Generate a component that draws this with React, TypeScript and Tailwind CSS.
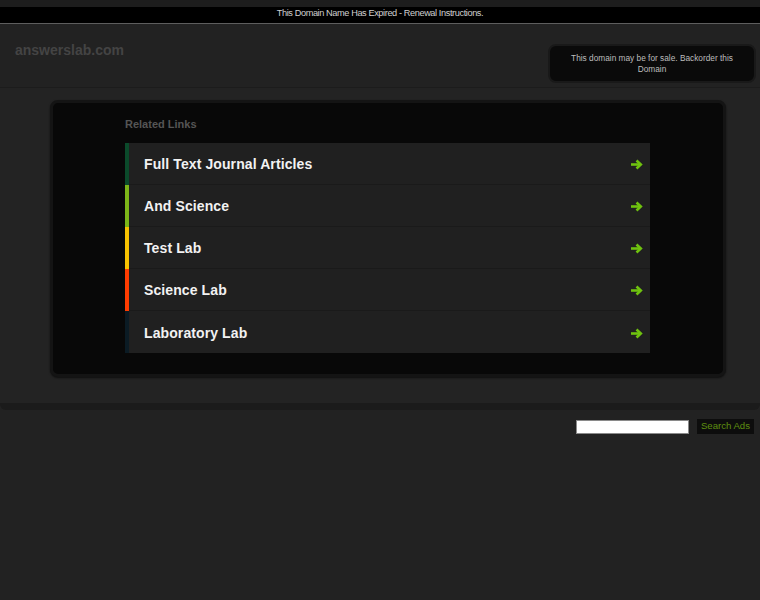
import React from "react";

const links = [
  { label: "Full Text Journal Articles", color: "bg-[#0b4a2b]" },
  { label: "And Science", color: "bg-[#7cb518]" },
  { label: "Test Lab", color: "bg-[#f7c200]" },
  { label: "Science Lab", color: "bg-[#ff3c00]" },
  { label: "Laboratory Lab", color: "bg-[#0b1b24]" },
];

function Arrow() {
  return (
    <svg width="13" height="11" viewBox="0 0 13 11" fill="none">
      <path d="M1 5.5H10.5" stroke="#6fc20f" strokeWidth="2.6" />
      <path d="M6.5 1.5L10.8 5.5L6.5 9.5" stroke="#6fc20f" strokeWidth="2.6" strokeLinejoin="miter" />
    </svg>
  );
}

export default function App() {
  return (
    <div className="min-h-[600px] bg-[#222222] font-['Liberation_Sans',Arial,sans-serif]">
      <div className="h-[7px] bg-[#1d1d1d]" />
      <div className="h-[17px] bg-black border-b border-[#5e5e5e] flex items-start justify-center pt-[1px] text-[9.2px] leading-[10px] tracking-[-0.4px] text-[#d0d0d0]">
        This Domain Name Has Expired - Renewal Instructions.
      </div>
      <div className="h-[64px] flex justify-between border-b border-[#1c1c1c]">
        <div className="pl-[15px] pt-[18px] text-[14px] leading-[17px] font-bold text-[#444444]">
          answerslab.com
        </div>
        <div className="mt-[20px] mr-[4px] w-[208px] h-[39px] rounded-lg bg-[#0a0a0a] border-2 border-[#191919] flex items-center justify-center text-center px-3 text-[8.3px] leading-[11px] text-[#bdbdbd]">
          This domain may be for sale. Backorder this Domain
        </div>
      </div>
      <div className="bg-[#232323] pt-[12px] pb-[26px] border-b-[7px] border-[#1b1b1b] rounded-b-md">
        <div className="ml-[50px] w-[676px] rounded-lg border-[3px] border-[#141414] bg-[#080808] pl-[72px] pr-[73px] pt-[15px] pb-[21px] shadow-[0_1px_2px_rgba(0,0,0,0.6)]">
          <div className="text-[11px] leading-[13px] font-bold text-[#555555] mb-[12px]">Related Links</div>
          <div className="flex flex-col">
            {links.map((l, i) => (
              <div key={l.label} className="flex h-[42px] bg-[#202020]">
                <div className={`w-[4px] ${l.color}`} />
                <div
                  className={`flex-1 flex items-center justify-between pl-[15px] pr-[7px] pt-[2px] ${
                    i < links.length - 1 ? "border-b border-[#1a1a1a]" : ""
                  }`}
                >
                  <span className="text-[14px] font-bold text-[#f2f2f2] tracking-[0.1px]">{l.label}</span>
                  <Arrow />
                </div>
              </div>
            ))}
          </div>
        </div>
      </div>
      <div className="flex justify-end items-center gap-[8px] pt-[9px] pr-[6px]">
        <div className="w-[113px] h-[14px] bg-white border border-[#8a8a8a]" />
        <div className="h-[15px] px-[4px] bg-[#0d0d0d] flex items-center text-[9.6px] text-[#5f9010]">Search Ads</div>
      </div>
    </div>
  );
}
